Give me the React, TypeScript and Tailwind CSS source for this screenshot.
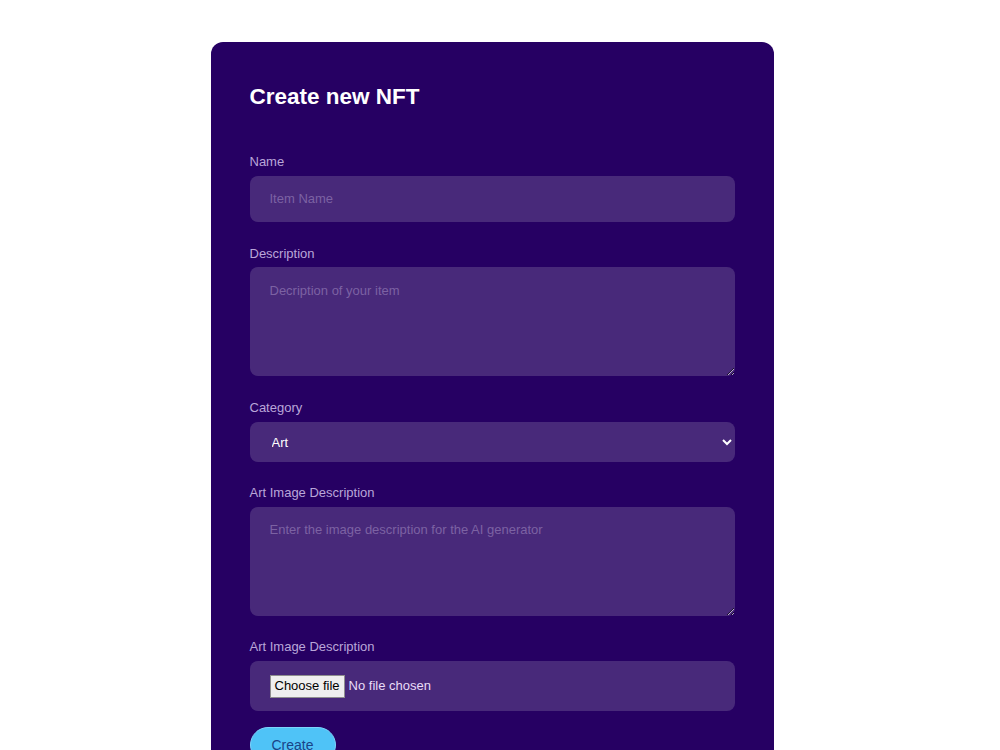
import React from "react";

export default function App() {
  const label = "block text-[13px] leading-4 text-[#b9a6d9]";
  const field =
    "block w-full rounded-lg bg-[#48297a] text-[13px] text-[#e6dcf5] placeholder:text-[#7c62a3] outline-none";
  return (
    <div className="min-h-[750px] w-full bg-white font-['Liberation_Sans',Arial,sans-serif]">
      <div className="mx-auto pt-[42px] w-[563px] translate-x-[-8px]">
        <div className="rounded-xl bg-[#260063] px-[39px] pt-[41px] pb-[40px] min-h-[720px]">
          <h1 className="text-[22.5px] leading-7 font-bold text-white">Create new NFT</h1>

          <label className={`${label} mt-[43px]`}>Name</label>
          <input
            className={`${field} mt-[6px] h-[46px] px-5 pb-[1px]`}
            placeholder="Item Name"
          />

          <label className={`${label} mt-[24px]`}>Description</label>
          <textarea
            className={`${field} mt-[5px] h-[109px] px-5 py-[14px] resize-y`}
            placeholder="Decription of your item"
          />

          <label className={`${label} mt-[24px]`}>Category</label>
          <select
            className={`${field} mt-[6px] h-[40px] pl-[18px] pr-2 text-white appearance-auto`}
            defaultValue="Art"
          >
            <option>Art</option>
            <option>Music</option>
            <option>Video</option>
          </select>

          <label className={`${label} mt-[23px]`}>Art Image Description</label>
          <textarea
            className={`${field} mt-[6px] h-[109px] px-5 py-[13px] resize-y`}
            placeholder="Enter the image description for the AI generator"
          />

          <label className={`${label} mt-[23px]`}>Art Image Description</label>
          <label className="mt-[6px] flex h-[50px] items-center gap-[4px] rounded-lg bg-[#48297a] px-5 text-[13px] leading-4">
            <input type="file" className="hidden" />
            <span className="flex h-[23px] items-center border border-[#8f8f8f] bg-[#efefef] px-[4px] text-black">
              Choose file
            </span>
            <span className="text-[#e8dcf7]">No file chosen</span>
          </label>

          <button className="mt-4 h-9 rounded-full border border-[#7dd3fc] bg-[#4fc3f7] px-[21px] text-[14px] text-[#1a4488]">
            Create
          </button>
        </div>
      </div>
    </div>
  );
}
